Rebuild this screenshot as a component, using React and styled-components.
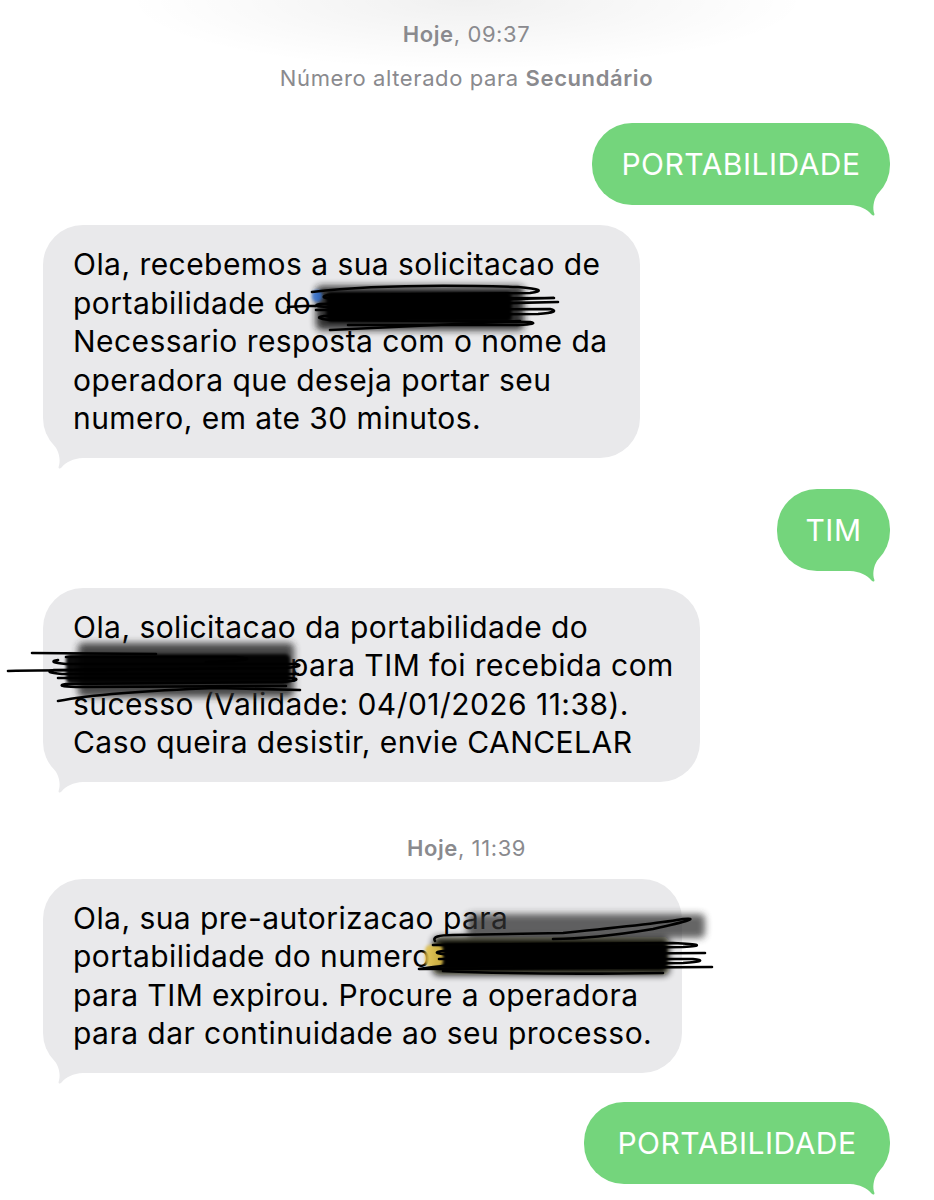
import React from "react";
import styled, { createGlobalStyle } from "styled-components";

const GlobalStyle = createGlobalStyle`
  html, body {
    margin: 0;
    padding: 0;
    background: #fff;
  }
  body {
    font-family: Inter, "Liberation Sans", Arial, sans-serif;
    -webkit-font-smoothing: antialiased;
  }
`;

const Page = styled.div`
  position: relative;
  width: 934px;
  height: 1200px;
  overflow: hidden;
  background:
    radial-gradient(ellipse 340px 70px at 50% 0, rgba(0, 0, 0, 0.06), rgba(0, 0, 0, 0) 100%),
    #fff;
`;

const Thread = styled.div`
  display: flex;
  flex-direction: column;
  padding: 21px 44px 0 43px;
`;

const Stamp = styled.div`
  align-self: center;
  margin-top: ${(p) => p.$mt || 0}px;
  font-size: 22px;
  line-height: 26px;
  letter-spacing: 0.6px;
  color: #8a8a8e;
  white-space: nowrap;

  b {
    font-weight: 600;
  }
`;

const Bubble = styled.div`
  position: relative;
  align-self: ${(p) => (p.$out ? "flex-end" : "flex-start")};
  box-sizing: border-box;
  width: ${(p) => p.$w}px;
  min-height: ${(p) => p.$h || 0}px;
  margin-top: ${(p) => p.$mt || 0}px;
  padding: ${(p) => (p.$out ? "22px 0" : "20px 30px")};
  border-radius: 40px;
  background: ${(p) => (p.$out ? "#74d57c" : "#e9e9eb")};
  color: ${(p) => (p.$out ? "#fff" : "#000")};
  font-size: 30px;
  line-height: ${(p) => (p.$out ? "38px" : "38.5px")};
  letter-spacing: ${(p) => (p.$out ? "0.5px" : "0.45px")};
  text-align: ${(p) => (p.$out ? "center" : "left")};
  white-space: nowrap;
`;

const Line = styled.div`
  position: relative;
  z-index: 1;
`;

const Gap = styled.span`
  display: inline-block;
  width: ${(p) => p.$w}px;
`;

const TailSvg = styled.svg`
  position: absolute;
  bottom: -12px;
  width: 40px;
  height: 32px;
  ${(p) => (p.$out ? "right: 0;" : "left: 0; transform: scaleX(-1);")}
`;

const Tail = ({ out }) => (
  <TailSvg $out={out} viewBox="0 0 40 32">
    <path
      d="M0 20 C10 20.5 17 24 21.5 29.5 C23 31.2 25 31 24.3 28.5 C22.6 24 23 16 27.5 9 L27.5 0 L0 0 Z"
      fill={out ? "#74d57c" : "#e9e9eb"}
    />
  </TailSvg>
);

const ScribbleSvg = styled.svg`
  position: absolute;
  z-index: 2;
  left: ${(p) => p.$x}px;
  top: ${(p) => p.$y}px;
  width: ${(p) => p.$w}px;
  height: ${(p) => p.$h}px;
  overflow: visible;
  pointer-events: none;
`;

const Scribble = ({ id, x, y, w, h, blocks, strokes }) => (
  <ScribbleSvg $x={x} $y={y} $w={w} $h={h} viewBox={`0 0 ${w} ${h}`}>
    <defs>
      <filter id={`${id}a`} x="-20%" y="-50%" width="140%" height="200%">
        <feGaussianBlur stdDeviation="3.5" />
      </filter>
      <filter id={`${id}b`} x="-20%" y="-50%" width="140%" height="200%">
        <feGaussianBlur stdDeviation="1.5" />
      </filter>
    </defs>
    {blocks.map((b, i) => (
      <rect
        key={i}
        x={b.x}
        y={b.y}
        width={b.w}
        height={b.h}
        rx="5"
        fill={b.c}
        opacity={b.o || 1}
        filter={`url(#${id}${b.soft ? "a" : "b"})`}
      />
    ))}
    {strokes.map((d, i) => (
      <path
        key={i}
        d={d}
        fill="none"
        stroke="#000"
        strokeWidth="2.6"
        strokeLinecap="round"
        strokeLinejoin="round"
      />
    ))}
  </ScribbleSvg>
);

export default function App() {
  return (
    <Page>
      <GlobalStyle />
      <Thread>
        <Stamp>
          <b>Hoje</b>, 09:37
        </Stamp>
        <Stamp $mt={18}>
          Número alterado para <b>Secundário</b>
        </Stamp>

        <Bubble $out $w={298} $mt={32}>
          PORTABILIDADE
          <Tail out />
        </Bubble>

        <Bubble $w={597} $mt={20}>
          <Line>Ola, recebemos a sua solicitacao de</Line>
          <Line>portabilidade do</Line>
          <Line>Necessario resposta com o nome da</Line>
          <Line>operadora que deseja portar seu</Line>
          <Line>numero, em ate 30 minutos.</Line>
          <Tail />
          <Scribble
            id="s1"
            x={225}
            y={55}
            w={300}
            h={60}
            blocks={[
              { x: 48, y: 6, w: 208, h: 44, c: "#1a1a1a", o: 0.9, soft: true },
              { x: 58, y: 12, w: 186, h: 30, c: "#000" },
              { x: 44, y: 10, w: 10, h: 12, c: "#2f6fd6", o: 0.8 },
            ]}
            strokes={[
              "M44 12 Q120 3 250 7 Q284 10 262 13 L60 15 Q48 18 70 19 L286 18 L52 24 Q42 26 60 27 L290 22",
              "M48 30 L282 29 Q294 32 270 34 L56 36 Q44 38 62 40 L262 42 Q272 44 250 45 L80 45",
              "M48 26 L36 26 L20 27",
              "M62 50 Q150 46 252 41",
            ]}
          />
        </Bubble>

        <Bubble $out $w={113} $mt={31}>
          TIM
          <Tail out />
        </Bubble>

        <Bubble $w={657} $mt={17}>
          <Line>Ola, solicitacao da portabilidade do</Line>
          <Line>
            <Gap $w={217} />
            para TIM foi recebida com
          </Line>
          <Line>sucesso (Validade: 04/01/2026 11:38).</Line>
          <Line>Caso queira desistir, envie CANCELAR</Line>
          <Tail />
          <Scribble
            id="s2"
            x={-37}
            y={52}
            w={300}
            h={70}
            blocks={[
              { x: 72, y: 3, w: 216, h: 54, c: "#2a2a2a", o: 0.85, soft: true },
              { x: 60, y: 14, w: 224, h: 30, c: "#000", o: 0.95 },
            ]}
            strokes={[
              "M26 13 L150 14",
              "M52 20 Q40 22 60 24 L290 24 Q300 26 280 28 L48 30 Q36 32 56 34 L292 34",
              "M2 31 Q30 30 120 30",
              "M52 38 L286 38 Q298 40 276 42 L60 44 Q48 46 70 47 L280 46",
              "M52 61 Q100 52 210 48 L294 50",
              "M60 17 L230 17 Q262 20 200 22",
            ]}
          />
        </Bubble>

        <Stamp $mt={53}>
          <b>Hoje</b>, 11:39
        </Stamp>

        <Bubble $w={639} $mt={18}>
          <Line>Ola, sua pre-autorizacao para</Line>
          <Line>portabilidade do numero</Line>
          <Line>para TIM expirou. Procure a operadora</Line>
          <Line>para dar continuidade ao seu processo.</Line>
          <Tail />
          <Scribble
            id="s3"
            x={370}
            y={26}
            w={305}
            h={75}
            blocks={[
              { x: 54, y: 9, w: 238, h: 24, c: "#333", o: 0.75, soft: true },
              { x: 20, y: 32, w: 236, h: 38, c: "#0a0a00", o: 0.95, soft: true },
              { x: 28, y: 38, w: 226, h: 26, c: "#000" },
              { x: 12, y: 40, w: 18, h: 22, c: "#e0c04a", o: 0.9 },
            ]}
            strokes={[
              "M22 36 Q18 30 40 30 L150 28 Q250 18 270 14 Q294 12 240 24 Q180 34 140 34",
              "M20 40 L260 38 Q302 40 270 42 L30 46 Q14 48 40 50 L292 48",
              "M26 54 L280 54 Q298 56 270 58 L40 60 Q18 62 6 64 L299 62",
              "M30 66 Q120 70 250 68",
            ]}
          />
        </Bubble>

        <Bubble $out $w={306} $mt={29}>
          PORTABILIDADE
          <Tail out />
        </Bubble>

        <Bubble $w={597} $h={80} $mt={18} />
      </Thread>
    </Page>
  );
}
